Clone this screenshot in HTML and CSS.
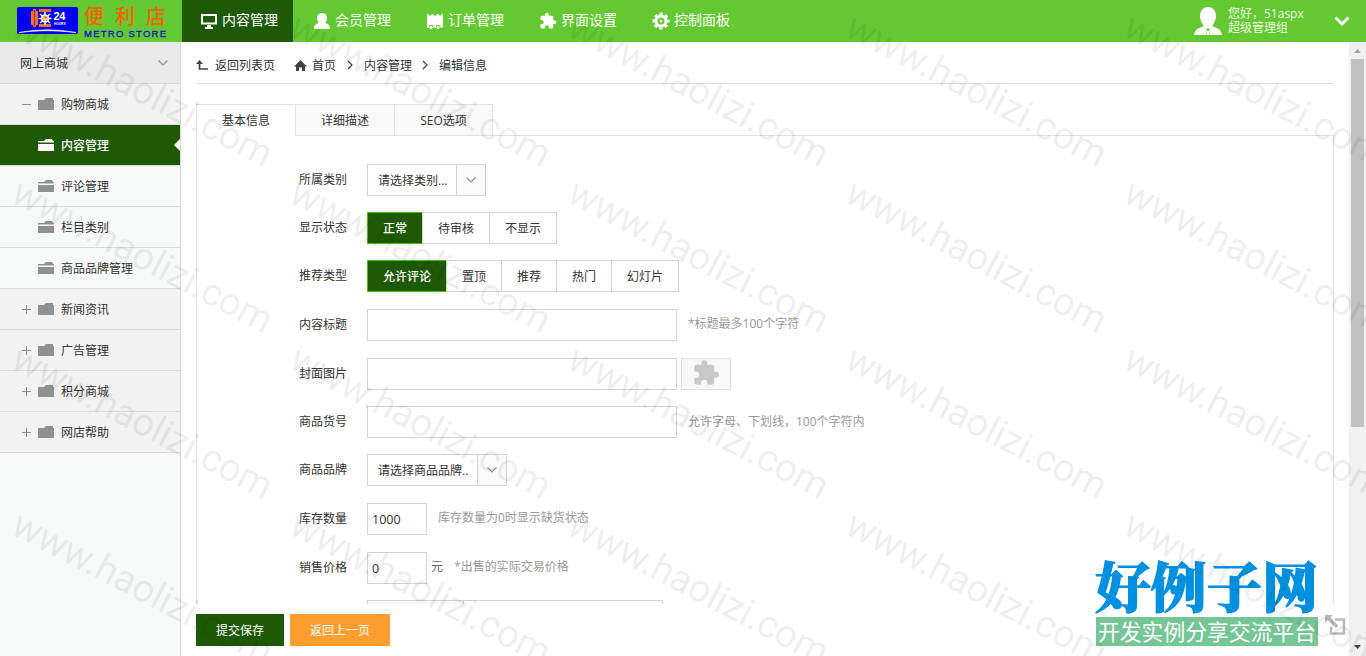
FILE: index.html
```html
<!DOCTYPE html>
<html lang="zh-CN">
<head>
<meta charset="utf-8">
<title>内容管理</title>
<link rel="stylesheet" href="styles.css">
</head>
<body>
<div class="app">
  <header class="header">
    <div class="logo">
      <svg class="logo-mark" width="61" height="27" viewBox="0 0 61 27">
        <rect width="61" height="27" rx="2" fill="#0000f8"/>
        <path d="M2 25.500Q30 20 59 25.500Q30 22 2 25.500Z" fill="#fff" stroke="#fff" stroke-width=".6"/>
        <path d="M14 4h2V2h3v2h2v14h-2v2h-3v-2h-2zM22 2h12v3H22zM22 17h12v3H22z" fill="#ff6a1a"/>
        <path d="M17.500 3v16" stroke="#7a3090"/>
        <path d="M28 5v13M21.500 11.500h13M23 7l10 9M33 7l-10 9" stroke="#fff" stroke-width="1.500"/>
        <circle cx="28" cy="11.500" r="4.200" fill="#fff"/>
        <circle cx="28" cy="11.500" r="2.600" fill="#ff6a1a"/>
        <path d="M27 10v3h2v-2" fill="none" stroke="#fff"/>
        <text x="36.500" y="13" class="mark-24">24</text>
        <text x="37" y="17.500" class="mark-hours">HOURS</text>
      </svg>
      <div class="logo-words"><div class="logo-cn">便利店</div><div class="logo-en">METRO STORE</div></div>
    </div>
    <nav class="nav">
      <a class="nav-item active"><svg width="18" height="18" viewBox="0 0 18 18"><path d="M2 3h14v8.500H2z" fill="none" stroke="#fff" stroke-width="2"/><path d="M7 13h4v2h2v2H5v-2h2z" fill="#fff"/></svg>内容管理</a>
      <a class="nav-item"><svg width="18" height="18" viewBox="0 0 18 18"><path d="M9 1c3.500 0 5 2.500 5 5 0 2-1 4-2 5 3 .8 5 2 5 6H1c0-4 2-5.200 5-6-1-1-2-3-2-5 0-2.500 1.500-5 5-5z" fill="#fff"/></svg>会员管理</a>
      <a class="nav-item"><svg width="18" height="18" viewBox="0 0 18 18"><path d="M1 2h1l2 2 2-2h1l2 2.500L11 2h1l2 2 2-2h1v13.500H1z" fill="#fff"/><path d="M3.500 15.500v-2h3v2M10.500 15.500v-2h3v2" fill="none" stroke="#64c832"/><circle cx="5" cy="15.500" r="1.500" fill="#fff"/><circle cx="12" cy="15.500" r="1.500" fill="#fff"/></svg>订单管理</a>
      <a class="nav-item"><svg width="18" height="18" viewBox="0 0 24 24"><use href="#puzzle" fill="#fff"/></svg>界面设置</a>
      <a class="nav-item"><svg width="18" height="18" viewBox="0 0 18 18"><g transform="translate(9 9)"><circle r="5" fill="none" stroke="#fff" stroke-width="3"/><circle r="7.200" fill="none" stroke="#fff" stroke-width="2.600" stroke-dasharray="3.200 2.455" stroke-dashoffset="1.600"/><circle r="1.500" fill="#fff"/></g></svg>控制面板</a>
    </nav>
    <div class="user">
      <svg width="28" height="28" viewBox="0 0 28 28"><path d="M14 0c5 0 8 4 8 9 0 4-2 8-4 10 4 2 9 2 10 9H16l-1-5 1-1-2-1-2 1 1 1-1 5H0c1-7 6-7 10-9-2-2-4-6-4-10 0-5 3-9 8-9z" fill="#fff"/><path d="M13 24h2l.8 4h-3.600z" fill="#fff"/></svg>
      <div class="user-text">您好，51aspx<br>超级管理组</div>
      <svg class="user-arrow" width="16" height="11" viewBox="0 0 16 11"><path d="M1.500 1.500L8 8l6.500-6.500" fill="none" stroke="#fff" stroke-width="2.800"/></svg>
    </div>
  </header>

  <div class="body">
    <aside class="sidebar">
      <div class="side-head">网上商城<svg width="10" height="6" viewBox="0 0 10 6"><path d="M.5.5L5 5 9.500.5" fill="none" stroke="#909090" stroke-width="1.200"/></svg></div>
      <div class="side-row"><i class="toggle minus"></i><svg class="folder"><use href="#folder"/></svg><span>购物商城</span></div>
      <div class="side-row child current"><i class="toggle none"></i><svg class="folder"><use href="#folder-open"/></svg><span>内容管理</span></div>
      <div class="side-row child"><i class="toggle none"></i><svg class="folder"><use href="#folder-open"/></svg><span>评论管理</span></div>
      <div class="side-row child"><i class="toggle none"></i><svg class="folder"><use href="#folder-open"/></svg><span>栏目类别</span></div>
      <div class="side-row child"><i class="toggle none"></i><svg class="folder"><use href="#folder-open"/></svg><span>商品品牌管理</span></div>
      <div class="side-row"><i class="toggle"></i><svg class="folder"><use href="#folder"/></svg><span>新闻资讯</span></div>
      <div class="side-row"><i class="toggle"></i><svg class="folder"><use href="#folder"/></svg><span>广告管理</span></div>
      <div class="side-row"><i class="toggle"></i><svg class="folder"><use href="#folder"/></svg><span>积分商城</span></div>
      <div class="side-row"><i class="toggle"></i><svg class="folder"><use href="#folder"/></svg><span>网店帮助</span></div>
    </aside>

    <main class="main">
      <div class="crumbs">
        <svg class="back-icon" width="12" height="11" viewBox="0 0 12 11"><path d="M3.500 2v7H12" fill="none" stroke="#444" stroke-width="1.700"/><path d="M0 4l3.500-4L7 4z" fill="#444"/></svg>
        <span class="crumb-back">返回列表页</span>
        <svg class="home-icon" width="13" height="11" viewBox="0 0 13 11"><path d="M6.500 0L13 6.500h-2V11H8V7.500H5V11H2V6.500H0z" fill="#444"/></svg>
        <span>首页</span>
        <svg class="sep" width="6" height="10" viewBox="0 0 6 10"><path d="M1 1l4 4-4 4" fill="none" stroke="#444" stroke-width="1.200"/></svg>
        <span>内容管理</span>
        <svg class="sep" width="6" height="10" viewBox="0 0 6 10"><path d="M1 1l4 4-4 4" fill="none" stroke="#444" stroke-width="1.200"/></svg>
        <span>编辑信息</span>
      </div>
      <div class="tabs"><span class="tab on">基本信息</span><span class="tab">详细描述</span><span class="tab last">SEO选项</span><span class="tab-fill"></span></div>
      <div class="panel">
        <div class="row"><label>所属类别</label><div class="select"><span class="select-text cat">请选择类别...</span><span class="select-btn"><svg width="10" height="6" viewBox="0 0 10 6"><path d="M.5.5L5 5 9.500.5" fill="none" stroke="#909090" stroke-width="1.200"/></svg></span></div></div>
        <div class="row"><label>显示状态</label><div class="group"><b>正常</b><span>待审核</span><span>不显示</span></div></div>
        <div class="row gap17"><label>推荐类型</label><div class="group"><b>允许评论</b><span>置顶</span><span>推荐</span><span>热门</span><span>幻灯片</span></div></div>
        <div class="row gap17"><label>内容标题</label><div class="input"></div><span class="hint">*标题最多100个字符</span></div>
        <div class="row"><label>封面图片</label><div class="input"></div><div class="upload"><svg width="28" height="28" viewBox="0 0 24 24"><use href="#puzzle" fill="#c8c8c8"/></svg></div></div>
        <div class="row"><label>商品货号</label><div class="input"></div><span class="hint low">允许字母、下划线，100个字符内</span></div>
        <div class="row gap17"><label>商品品牌</label><div class="select"><span class="select-text brand">请选择商品品牌..</span><span class="select-btn"><svg width="10" height="6" viewBox="0 0 10 6"><path d="M.5.5L5 5 9.500.5" fill="none" stroke="#909090" stroke-width="1.200"/></svg></span></div></div>
        <div class="row gap17"><label>库存数量</label><div class="input small">1000</div><span class="hint">库存数量为0时显示缺货状态</span></div>
        <div class="row"><label>销售价格</label><div class="input small">0</div><span class="unit">元</span><span class="hint">*出售的实际交易价格</span></div>
        <div class="row"><label></label><div class="spec"><span></span></div></div>
      </div>
      <div class="actions"><span class="btn save">提交保存</span><span class="btn return">返回上一页</span></div>
    </main>

    <div class="scrollbar">
      <svg class="up" width="7" height="4" viewBox="0 0 7 4"><path d="M0 4L3.500 0 7 4z" fill="#a3a3a3"/></svg>
      <div class="thumb"></div>
      <svg class="down" width="7" height="4" viewBox="0 0 7 4"><path d="M0 0L3.500 4 7 0z" fill="#404040"/></svg>
    </div>
  </div>
</div>

<div class="badge">
  <svg width="224" height="58" viewBox="0 0 224 58"><text class="badge-title" x="0" y="49" textLength="223" lengthAdjust="spacingAndGlyphs">好例子网</text></svg>
  <div class="badge-sub">开发实例分享交流平台</div>
</div>
<svg class="expand" width="22" height="22" viewBox="0 0 22 22"><path d="M10 4.500h9v14H6V12" fill="none" stroke="#b9b9b9" stroke-width="2.500"/><path d="M0 0h8L5.500 2.500l8 8-2.500 2.500-8-8L0 8z" fill="#b9b9b9"/></svg>

<svg class="watermark" width="1366" height="656" viewBox="0 0 1366 656">
  <defs>
    <path id="puzzle" d="M20.500 11H19V7a2 2 0 0 0-2-2h-4V3.500a2.500 2.500 0 0 0-5 0V5H4a2 2 0 0 0-2 2v3.800h1.500a2.700 2.700 0 0 1 0 5.400H2V20a2 2 0 0 0 2 2h3.800v-1.500a2.700 2.700 0 0 1 5.400 0V22H17a2 2 0 0 0 2-2v-4h1.500a2.500 2.500 0 0 0 0-5z"/>
    <path id="folder" d="M0 2h6l2-2h7v2h1v10H0z"/>
    <path id="folder-open" d="M0 2h6l2-2h6l1 2h1v1.500H0zM0 5h16v7H0z"/>
  </defs>
  <g class="wm">
    <text transform="translate(9 35) rotate(27.500)" textLength="288">www.haolizi.com</text>
    <text transform="translate(287 35) rotate(27.500)" textLength="288">www.haolizi.com</text>
    <text transform="translate(565 35) rotate(27.500)" textLength="288">www.haolizi.com</text>
    <text transform="translate(843 35) rotate(27.500)" textLength="288">www.haolizi.com</text>
    <text transform="translate(1121 35) rotate(27.500)" textLength="288">www.haolizi.com</text>
    <text transform="translate(9 201) rotate(27.500)" textLength="288">www.haolizi.com</text>
    <text transform="translate(287 201) rotate(27.500)" textLength="288">www.haolizi.com</text>
    <text transform="translate(565 201) rotate(27.500)" textLength="288">www.haolizi.com</text>
    <text transform="translate(843 201) rotate(27.500)" textLength="288">www.haolizi.com</text>
    <text transform="translate(1121 201) rotate(27.500)" textLength="288">www.haolizi.com</text>
    <text transform="translate(9 367) rotate(27.500)" textLength="288">www.haolizi.com</text>
    <text transform="translate(287 367) rotate(27.500)" textLength="288">www.haolizi.com</text>
    <text transform="translate(565 367) rotate(27.500)" textLength="288">www.haolizi.com</text>
    <text transform="translate(843 367) rotate(27.500)" textLength="288">www.haolizi.com</text>
    <text transform="translate(1121 367) rotate(27.500)" textLength="288">www.haolizi.com</text>
    <text transform="translate(9 533) rotate(27.500)" textLength="288">www.haolizi.com</text>
    <text transform="translate(287 533) rotate(27.500)" textLength="288">www.haolizi.com</text>
    <text transform="translate(565 533) rotate(27.500)" textLength="288">www.haolizi.com</text>
    <text transform="translate(843 533) rotate(27.500)" textLength="288">www.haolizi.com</text>
    <text transform="translate(1121 533) rotate(27.500)" textLength="288">www.haolizi.com</text>
  </g>
</svg>
</body>
</html>
```
FILE: styles.css
```css
* { box-sizing: border-box; }
body { margin: 0; overflow: hidden; font: 12px/18px "Open Sans", "Noto Sans CJK SC", sans-serif; color: #333; background: #fff; }
svg { display: block; flex: none; }
.app { height: 656px; display: flex; flex-direction: column; }

.header { height: 42px; flex: none; display: flex; background: #64c832; color: #fff; }
.logo { width: 182px; display: flex; padding: 7px 0 0 17px; }
.logo-words { margin: -2px 0 0 6px; white-space: nowrap; }
.logo-cn { font: 500 20px/22px "Noto Sans CJK SC", sans-serif; letter-spacing: 11px; color: #ff6000; }
.logo-en { font: 9.5px/12px "Liberation Sans", sans-serif; letter-spacing: 1.25px; color: #1414c8; margin-top: 1px; -webkit-text-stroke: .3px #1414c8; }
.mark-24 { font: bold 11px "Liberation Sans", sans-serif; fill: #fff; letter-spacing: -.3px; }
.mark-hours { font: bold 3.2px "Liberation Sans", sans-serif; fill: #fff; }
.nav { display: flex; gap: 2px; font-size: 14px; }
.nav-item { width: 111px; padding: 0 0 2px 18px; display: flex; align-items: center; gap: 4px; white-space: nowrap; }
.nav-item svg { margin-top: 1px; }
.nav-item.active { background: #1e5a05; }
.user { margin-left: auto; display: flex; padding: 7px 16px 0 0; color: #eefae8; }
.user-text { width: 106px; margin-left: 6px; line-height: 14px; }
.user-arrow { margin-top: 9px; }

.body { flex: 1; display: flex; min-height: 0; }
.sidebar { width: 181px; flex: none; border-right: 1px solid #dadada; background: #f6f9f8; }
.side-head { height: 42px; padding: 2px 12px 0 20px; display: flex; align-items: center; justify-content: space-between; background: #e9e9e9; border-bottom: 1px solid #dadada; }
.side-head svg { margin-bottom: 2px; }
.side-row { height: 41px; padding-left: 22px; display: flex; align-items: center; background: #f2f2f2; border-bottom: 1px solid #dadada; }
.side-row span { padding-top: 2px; }
.side-row.child { background: #f6f9f8; }
.side-row.current { background: #1e5a05; color: #fff; position: relative; font-weight: 500; }
.side-row.current::after { content: ""; position: absolute; right: 0; top: 14px; border: 6px solid transparent; border-left: 0; border-right-color: #fff; }
.toggle { width: 9px; height: 9px; margin-right: 7px; background: linear-gradient(#909090, #909090) center / 9px 1px no-repeat, linear-gradient(#909090, #909090) center / 1px 9px no-repeat; }
.toggle.minus { background: linear-gradient(#909090, #909090) center / 9px 1px no-repeat; }
.toggle.none { background: none; }
.folder { width: 16px; height: 12px; margin-right: 7px; fill: #909090; }
.current .folder { fill: #fff; }

.main { flex: 1; padding: 0 15px; display: flex; flex-direction: column; min-width: 0; }
.crumbs { height: 42px; flex: none; display: flex; align-items: center; padding-top: 5px; border-bottom: 1px solid #e1e1e1; }
.crumbs span { padding-top: 2px; }
.back-icon { margin-right: 7px; }
.home-icon { margin: 0 5px 0 19px; }
.sep { margin: 0 11px 0 11px; }
.sep ~ .sep { margin: 0 11px 0 10px; }
.tabs { height: 32px; margin-top: 20px; flex: none; display: flex; }
.tab { width: 99px; border: 1px solid #e1e1e1; border-right: 0; background: #f8f8f8; display: flex; align-items: center; justify-content: center; padding-top: 2px; }
.tab.on { background: #fff; border-bottom: 0; padding-top: 1px; }
.tab.last { border-right: 1px solid #e1e1e1; }
.tab-fill { flex: 1; border-bottom: 1px solid #e1e1e1; }
.panel { height: 468px; flex: none; overflow: hidden; padding: 28px 0 0 85px; border: solid #e1e1e1; border-width: 0 1px; }
.row { height: 32px; margin-bottom: 16px; display: flex; }
.row.gap17 { margin-bottom: 17px; }
.row label { width: 65px; margin-right: 20px; line-height: 31px; text-align: right; }
.select { display: flex; border: 1px solid #d4d4d4; }
.select-text { padding: 1px 0 0 10px; line-height: 30px; white-space: nowrap; }
.cat { width: 88px; }
.brand { width: 109px; }
.select-btn { width: 29px; border-left: 1px solid #d4d4d4; background: #fafafa; display: flex; align-items: center; justify-content: center; }
.group { display: flex; line-height: 31px; }
.group span { border: 1px solid #d4d4d4; border-left: 0; padding: 0 15px; }
.group b { border: 1px solid #52b81e; border-right-width: 0; padding: 0 16px 0 15px; margin-right: -1px; color: #fff; background: #1e5a05; font-weight: 500; }
.group b + span { border-left: 1px solid #d4d4d4; }
.input { width: 310px; border: 1px solid #d4d4d4; }
.input.small { width: 60px; padding: 1px 0 0 4px; line-height: 30px; font-size: 12.5px; }
.hint { color: #999; margin-left: 11px; line-height: 30px; }
.hint.low { line-height: 32px; }
.unit { margin-left: 4px; line-height: 30px; color: #666; }
.upload { width: 50px; margin-left: 4px; background: #f8f8f8; border: 1px solid #e1e1e1; display: flex; justify-content: center; }
.spec { width: 296px; border: 1px solid #d4d4d4; }
.spec span { display: block; width: 96px; height: 30px; background: #f8f8f8; border-right: 1px solid #d4d4d4; }
.actions { display: flex; gap: 6px; padding-top: 10px; }
.btn { height: 32px; line-height: 33px; text-align: center; color: #fff; }
.save { width: 88px; background: #1e5a05; }
.return { width: 100px; background: #ff9e30; }

.scrollbar { width: 17px; background: #f1f1f1; display: flex; flex-direction: column; align-items: center; padding: 7px 0; }
.thumb { width: 13px; height: 368px; margin-top: 6px; background: #c1c1c1; }
.down { margin-top: auto; }

.badge { position: absolute; left: 1095px; top: 559px; width: 224px; }
.badge-title { font: 900 54px "Noto Serif CJK SC", "Noto Sans CJK SC", serif; fill: #0090e0; stroke: #0090e0; stroke-width: 1.2px; }
.badge-sub { margin: 0 1px; height: 29px; background: #76c596; color: #fff; font: 21.8px/28px "Noto Sans CJK SC", sans-serif; text-align: center; white-space: nowrap; }
.expand { position: absolute; left: 1325px; top: 615px; }
.watermark { position: absolute; left: 0; top: 0; pointer-events: none; }
.wm { font: 400 38.5px Roboto, sans-serif; fill: #000; fill-opacity: .075; }
```
